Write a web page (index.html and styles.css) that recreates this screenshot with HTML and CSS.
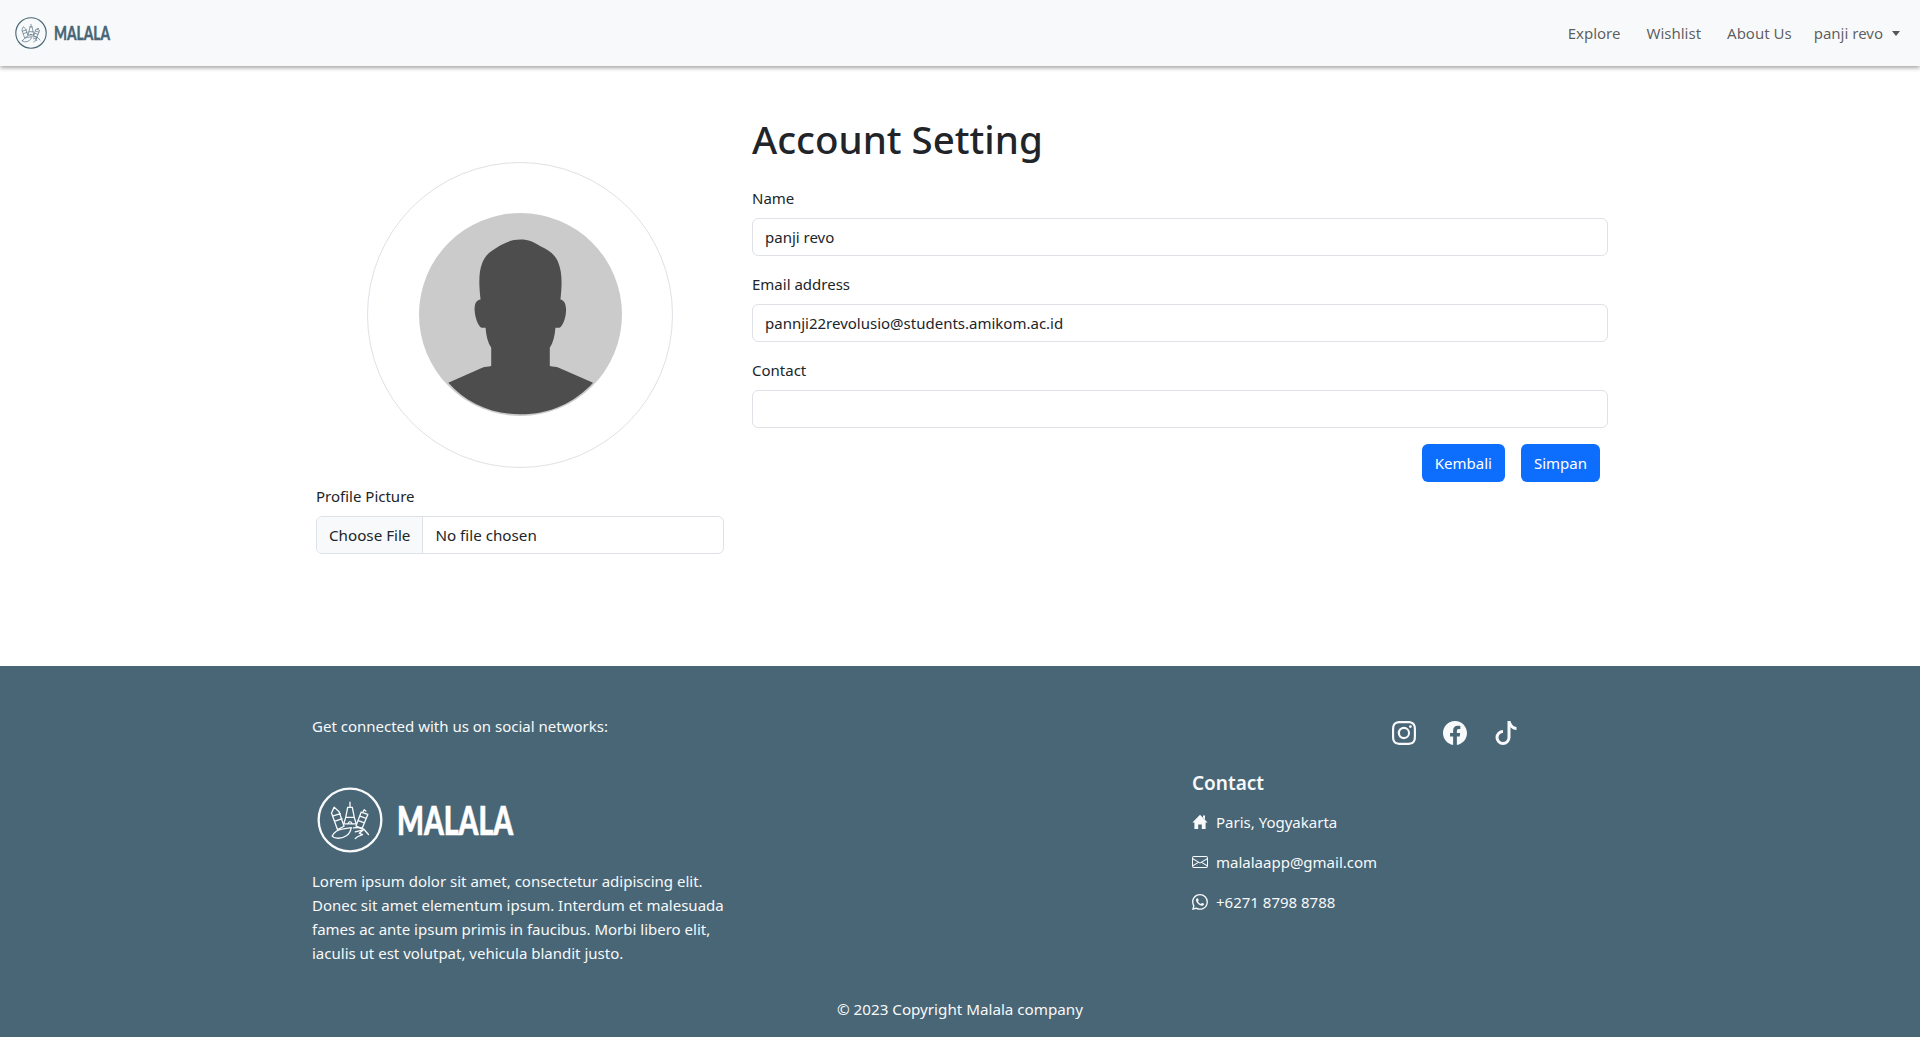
FILE: index.html
```html
<!DOCTYPE html>
<html lang="en">
<head>
	<meta charset="utf-8">
	<title>Account Setting</title>
	<link rel="stylesheet" href="styles.css">
</head>
<body>
	<svg class="defs" width="0" height="0" aria-hidden="true">
		<symbol id="emblem" viewBox="50 48 200 200">
			<circle cx="150" cy="148" r="95" fill="none" stroke="currentColor" stroke-width="7"/>
			<g fill="none" stroke="currentColor" stroke-width="4" stroke-linejoin="round" stroke-linecap="round">
				<path d="M94 127l8-18 15 14 15 44-20 10zM97 136l24-7M103 152l23-8"/>
				<path d="M150 94v16M144 110h12M143 110l-6 30-6 20h38l-6-20-6-30M137 140h26M143 160q7-14 14 0"/>
				<path d="M184 124l20 7-18 44-18-9zM180 136l19 7M175 150l19 7M190 122l3-5 5 4"/>
				<path d="M96 197q10-20 34-22l24-4q-4 18-14 24-14 10-30 8-10-1-14-6z"/>
				<path d="M160 172q24-4 32 4l14 16M166 184l24-6-12 10 10 4-14 6-8 6"/>
			</g>
		</symbol>
	</svg>

	<nav class="navbar">
		<a class="brand" href="#">
			<svg class="brand-mark"><use href="#emblem"/></svg>
			<svg class="brand-word" viewBox="0 0 56 22"><text x="0" y="18" textLength="56" lengthAdjust="spacingAndGlyphs">MALALA</text></svg>
		</a>
		<ul class="nav-links">
			<li><a href="#">Explore</a></li>
			<li><a href="#">Wishlist</a></li>
			<li><a href="#">About Us</a></li>
			<li class="nav-user"><a href="#">panji revo<span class="caret"></span></a></li>
		</ul>
	</nav>

	<main class="page">
		<section class="col-picture">
			<div class="avatar-ring">
				<svg class="avatar" viewBox="355 190 610 610">
					<circle cx="660" cy="495" r="305" fill="#cbcbcb"/>
					<path fill="#4d4d4d" d="M660 270c25 0 40 8 60 20 25 12 45 25 54 50 10 25 12 60 6 110 10 2 16 10 17 30 0 25-10 50-20 55l-12 0c-2 25-7 45-17 60v55c10 2 20 2 27 5l103 45c-55 60-130 95-218 95s-163-35-217-95l102-45c8-3 18-3 27-5v-55c-10-15-15-35-17-60l-12 0c-10-5-20-30-21-55 0-20 6-28 18-30-6-50-5-85 5-110 10-25 25-35 50-50 20-12 40-20 65-20z"/>
				</svg>
			</div>
			<label class="field-label" for="picture">Profile Picture</label>
			<input class="field-input file-input" type="file" id="picture">
		</section>

		<section class="col-form">
			<h1>Account Setting</h1>
			<form>
				<div class="field">
					<label class="field-label" for="name">Name</label>
					<input class="field-input" type="text" id="name" value="panji revo">
				</div>
				<div class="field">
					<label class="field-label" for="email">Email address</label>
					<input class="field-input" type="text" id="email" value="pannji22revolusio@students.amikom.ac.id">
				</div>
				<div class="field">
					<label class="field-label" for="contact">Contact</label>
					<input class="field-input" type="text" id="contact">
				</div>
				<div class="form-actions">
					<button class="btn" type="button">Kembali</button>
					<button class="btn" type="button">Simpan</button>
				</div>
			</form>
		</section>
	</main>

	<footer class="footer">
		<div class="footer-inner">
			<div class="footer-top">
				<span>Get connected with us on social networks:</span>
				<div class="socials">
					<svg class="social-icon" viewBox="0 0 16 16"><path d="M8 0C5.829 0 5.556.01 4.703.048 3.85.088 3.269.222 2.76.42a3.917 3.917 0 0 0-1.417.923A3.927 3.927 0 0 0 .42 2.76C.222 3.268.087 3.85.048 4.7.01 5.555 0 5.827 0 8.001c0 2.172.01 2.444.048 3.297.04.852.174 1.433.372 1.942.205.526.478.972.923 1.417.444.445.89.719 1.416.923.51.198 1.09.333 1.942.372C5.555 15.99 5.827 16 8 16s2.444-.01 3.298-.048c.851-.04 1.434-.174 1.943-.372a3.916 3.916 0 0 0 1.416-.923c.445-.445.718-.891.923-1.417.197-.509.332-1.09.372-1.942C15.99 10.445 16 10.173 16 8s-.01-2.445-.048-3.299c-.04-.851-.175-1.433-.372-1.941a3.926 3.926 0 0 0-.923-1.417A3.911 3.911 0 0 0 13.24.42c-.51-.198-1.092-.333-1.943-.372C10.443.01 10.172 0 7.998 0h.003zm-.717 1.442h.718c2.136 0 2.389.007 3.232.046.78.035 1.204.166 1.486.275.373.145.64.319.92.599.28.28.453.546.598.92.11.281.24.705.275 1.485.039.843.047 1.096.047 3.231s-.008 2.389-.047 3.232c-.035.78-.166 1.203-.275 1.485a2.47 2.47 0 0 1-.599.919c-.28.28-.546.453-.92.598-.28.11-.704.24-1.485.276-.843.038-1.096.047-3.232.047s-2.39-.009-3.233-.047c-.78-.036-1.203-.166-1.485-.276a2.478 2.478 0 0 1-.92-.598 2.48 2.48 0 0 1-.6-.92c-.109-.281-.24-.705-.275-1.485-.038-.843-.046-1.096-.046-3.233 0-2.136.008-2.388.046-3.231.036-.78.166-1.204.276-1.486.145-.373.319-.64.599-.92.28-.28.546-.453.92-.598.282-.11.705-.24 1.485-.276.738-.034 1.024-.044 2.515-.045v.002zm4.988 1.328a.96.96 0 1 0 0 1.92.96.96 0 0 0 0-1.92zm-4.27 1.122a4.109 4.109 0 1 0 0 8.217 4.109 4.109 0 0 0 0-8.217zm0 1.441a2.667 2.667 0 1 1 0 5.334 2.667 2.667 0 0 1 0-5.334z"/></svg>
					<svg class="social-icon" viewBox="0 0 16 16"><path d="M16 8.049c0-4.446-3.582-8.05-8-8.05C3.58 0-.002 3.603-.002 8.05c0 4.017 2.926 7.347 6.75 7.951v-5.625h-2.03V8.05H6.75V6.275c0-2.017 1.195-3.131 3.022-3.131.876 0 1.791.157 1.791.157v1.98h-1.009c-.993 0-1.303.621-1.303 1.258v1.51h2.218l-.354 2.326H9.25V16c3.824-.604 6.75-3.934 6.75-7.951z"/></svg>
					<svg class="social-icon" viewBox="0 0 16 16"><path d="M9 0h1.98c.144.715.54 1.617 1.235 2.512C12.895 3.389 13.797 4 15 4v2c-1.753 0-3.07-.814-4-1.829V11a5 5 0 1 1-5-5v2a3 3 0 1 0 3 3V0Z"/></svg>
				</div>
			</div>

			<div class="footer-main">
				<div class="footer-about">
					<div class="footer-logo">
						<svg class="footer-mark"><use href="#emblem"/></svg>
						<svg class="footer-word" viewBox="0 0 116 44"><text x="0" y="37" textLength="116" lengthAdjust="spacingAndGlyphs">MALALA</text></svg>
					</div>
					<p>Lorem ipsum dolor sit amet, consectetur adipiscing elit. Donec sit amet elementum ipsum. Interdum et malesuada fames ac ante ipsum primis in faucibus. Morbi libero elit, iaculis ut est volutpat, vehicula blandit justo.</p>
				</div>
				<div class="footer-contact">
					<h2>Contact</h2>
					<div class="contact-row">
						<svg class="contact-icon" viewBox="0 0 16 16"><path d="M8 .8l7.6 7.6h-2V15H9.8v-4.5H6.2V15H2.4V8.4h-2zM11 1.5h2v4l-2-2z"/></svg>
						<span>Paris, Yogyakarta</span>
					</div>
					<div class="contact-row">
						<svg class="contact-icon" viewBox="0 0 16 16"><path d="M0 4a2 2 0 0 1 2-2h12a2 2 0 0 1 2 2v8a2 2 0 0 1-2 2H2a2 2 0 0 1-2-2V4Zm2-1a1 1 0 0 0-1 1v.217l7 4.2 7-4.2V4a1 1 0 0 0-1-1H2Zm13 2.383-4.708 2.825L15 11.105V5.383Zm-.034 6.876-5.64-3.471L8 9.583l-1.326-.795-5.64 3.47A1 1 0 0 0 2 13h12a1 1 0 0 0 .966-.741ZM1 11.105l4.708-2.897L1 5.383v5.722Z"/></svg>
						<span>malalaapp@gmail.com</span>
					</div>
					<div class="contact-row">
						<svg class="contact-icon" viewBox="0 0 16 16"><path d="M13.601 2.326A7.854 7.854 0 0 0 7.994 0C3.627 0 .068 3.558.064 7.926c0 1.399.366 2.76 1.057 3.965L0 16l4.204-1.102a7.933 7.933 0 0 0 3.79.965h.004c4.368 0 7.926-3.558 7.93-7.93A7.898 7.898 0 0 0 13.6 2.326zM7.994 14.521a6.573 6.573 0 0 1-3.356-.92l-.24-.144-2.494.654.666-2.433-.156-.251a6.56 6.56 0 0 1-1.007-3.505c0-3.626 2.957-6.584 6.591-6.584a6.56 6.56 0 0 1 4.66 1.931 6.557 6.557 0 0 1 1.928 4.66c-.004 3.639-2.961 6.592-6.592 6.592zm3.615-4.934c-.197-.099-1.17-.578-1.353-.646-.182-.065-.315-.099-.445.099-.133.197-.513.646-.627.775-.114.133-.232.148-.43.05-.197-.1-.836-.308-1.592-.985-.59-.525-.985-1.175-1.103-1.372-.114-.198-.011-.304.088-.403.087-.088.197-.232.296-.346.1-.114.133-.198.198-.33.065-.134.034-.248-.015-.347-.05-.099-.445-1.076-.612-1.47-.16-.389-.323-.335-.445-.34-.114-.007-.247-.007-.38-.007a.729.729 0 0 0-.529.247c-.182.198-.691.677-.691 1.654 0 .977.71 1.916.81 2.049.098.133 1.394 2.132 3.383 2.992.47.205.84.326 1.129.418.475.152.904.129 1.246.08.38-.058 1.171-.48 1.338-.943.164-.464.164-.86.114-.943-.049-.084-.182-.133-.38-.232z"/></svg>
						<span>+6271 8798 8788</span>
					</div>
				</div>
			</div>

			<div class="copyright">© 2023 Copyright Malala company</div>
		</div>
	</footer>
</body>
</html>
```

FILE: styles.css
```css
* { box-sizing: border-box; }
html, body { margin: 0; padding: 0; }
body { height: 1037px; overflow: hidden; background: #fff; color: #212529; font: 15px/24px "Noto Sans", "Open Sans", sans-serif; }
a { color: inherit; text-decoration: none; }
.defs { position: absolute; }

.navbar { height: 66px; display: flex; align-items: center; justify-content: space-between; padding: 0 20px 0 15px; background: #f8f9fa; box-shadow: 0 2px 4px rgba(0,0,0,.35); position: relative; }
.brand { display: flex; align-items: center; gap: 7px; color: #486676; }
.brand-mark { width: 32px; height: 32px; }
.brand-word { width: 56px; height: 22px; overflow: visible; }
.brand-word text { font: 900 19.5px "Lato", sans-serif; fill: #486676; stroke: #486676; stroke-width: .3px; }
.nav-links { list-style: none; margin: 0; padding: 0; display: flex; gap: 26px; color: rgba(0,0,0,.65); }
.nav-user { margin-left: -4px; }
.caret { display: inline-block; margin-left: 9px; vertical-align: 3px; border-top: 5px solid; border-left: 4.5px solid transparent; border-right: 4.5px solid transparent; }

.page { width: 1320px; height: 600px; margin: 0 auto; display: flex; }
.col-picture { width: 440px; padding: 96px 16px 0; }
.col-form { width: 880px; padding: 0 12px; }
h1 { margin: 49px 0 23px; font-size: 38.5px; line-height: 48px; font-weight: 500; }

.avatar-ring { width: 306px; height: 306px; margin: 0 auto 16px; border: 1px solid #dee2e6; border-radius: 50%; display: flex; align-items: center; justify-content: center; }
.avatar { width: 203px; height: 203px; margin-top: -1px; }

.field { margin-bottom: 16px; }
.field-label { display: block; margin-bottom: 8px; }
.field-input { display: block; width: 100%; height: 38px; padding: 6px 12px; border: 1px solid #dee2e6; border-radius: 6px; background: #fff; color: #212529; font: inherit; }
.file-input { padding: 0; overflow: hidden; line-height: 36px; font-size: 15.2px; }
.file-input::file-selector-button { height: 36px; margin: 0 12px 0 0; padding: 0 12px; border: 0; border-right: 1px solid #dee2e6; background: #f8f9fa; color: #212529; font: inherit; }

.form-actions { display: flex; justify-content: flex-end; gap: 16px; padding-right: 8px; }
.btn { height: 38px; padding: 0 13px; border: 0; border-radius: 6px; background: #0d6efd; color: #fff; font: inherit; }

.footer { height: 371px; background: #486676; color: #f8f9fa; }
.footer-inner { width: 1320px; height: 100%; margin: 0 auto; padding: 48px 12px 0; }
.footer-top { display: flex; justify-content: space-between; padding-bottom: 26px; }
.socials { display: flex; gap: 27px; margin-top: 7px; margin-right: 90px; }
.social-icon { width: 24px; height: 24px; fill: currentColor; }

.footer-main { display: flex; justify-content: space-between; height: 226px; }
.footer-about { width: 424px; padding-top: 16px; }
.footer-logo { display: flex; align-items: center; gap: 14px; padding-left: 5px; }
.footer-mark { width: 66px; height: 66px; }
.footer-word { width: 116px; height: 44px; overflow: visible; }
.footer-word text { font: 900 39px "Lato", sans-serif; fill: #fff; stroke: #fff; stroke-width: .6px; }
.footer-about p { margin: 16px 0 0; }

.footer-contact { width: 416px; }
h2 { margin: 0 0 15px; font-size: 19px; line-height: 24px; font-weight: 600; }
.contact-row { display: flex; align-items: center; gap: 8px; height: 24px; margin-bottom: 16px; }
.contact-icon { width: 16px; height: 16px; fill: currentColor; }

.copyright { text-align: center; font-size: 15.2px; }
```
